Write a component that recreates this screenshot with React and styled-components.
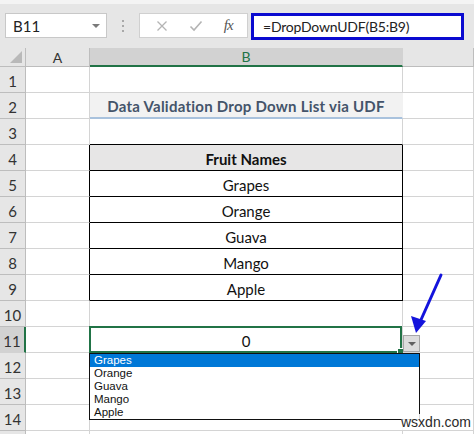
import React from "react";
import styled, { createGlobalStyle } from "styled-components";

const GRID = "#d4d4d4";
const HEAD_BG = "#e6e6e6";
const HEAD_SEL = "#d2d2d2";
const GREEN = "#217346";
const CELL_FONT = `Lato, "Open Sans", "Noto Sans", sans-serif`;

const Global = createGlobalStyle`
  html, body { margin: 0; padding: 0; background: #fff; }
  body { overflow: hidden; }
`;

const Page = styled.div`
  position: relative;
  width: 474px;
  height: 434px;
  overflow: hidden;
  background: #fff;
  font-family: ${CELL_FONT};
`;

/* ---------- formula bar ---------- */
const FormulaBar = styled.div`
  height: 48px;
  box-sizing: border-box;
  background: ${HEAD_BG};
  border-top: 4px solid #f4f4f4;
  display: flex;
  align-items: flex-start;
  padding: 9px 0 0 5px;
`;

const NameBox = styled.div`
  width: 102px;
  height: 25px;
  box-sizing: border-box;
  background: #fff;
  border: 1px solid #c8c8c8;
  display: flex;
  align-items: center;
  justify-content: space-between;
  padding: 0 6px 0 7px;
  font-size: 15px;
  color: #222;
`;

const Caret = styled.span`
  width: 0;
  height: 0;
  border-left: 4px solid transparent;
  border-right: 4px solid transparent;
  border-top: 4px solid #7a7a7a;
`;

const Dots = styled.div`
  width: 32px;
  height: 25px;
  display: flex;
  flex-direction: column;
  align-items: center;
  justify-content: center;
  gap: 3px;
  & > i {
    width: 2px;
    height: 2px;
    background: #a8a8a8;
  }
`;

const FxBox = styled.div`
  width: 109px;
  height: 25px;
  box-sizing: border-box;
  background: #fff;
  border: 1px solid #d0d0d0;
  display: flex;
  align-items: center;
  justify-content: space-around;
  padding: 0 4px 0 6px;
`;

const FxGlyph = styled.span`
  font-family: "Liberation Serif", serif;
  font-style: italic;
  font-size: 15px;
  color: #555;
  letter-spacing: -1px;
`;

const FormulaInput = styled.div`
  margin-left: 3px;
  width: 213px;
  height: 27px;
  box-sizing: border-box;
  border: 3px solid #0a0ad0;
  background: #fff;
  display: flex;
  align-items: center;
  padding-left: 9px;
  font-size: 14px;
  letter-spacing: -0.2px;
  color: #222;
`;

/* ---------- sheet grid ---------- */
const Sheet = styled.div`
  display: grid;
  grid-template-columns: 26px 64px 313px 1fr;
  grid-template-rows: 19px repeat(15, 26px);
`;

const Corner = styled.div`
  position: relative;
  background: ${HEAD_BG};
  box-sizing: border-box;
  border-right: 1px solid #bdbdbd;
  border-bottom: 1px solid #bdbdbd;
  &::after {
    content: "";
    position: absolute;
    right: 3px;
    bottom: 3px;
    width: 0;
    height: 0;
    border-left: 12px solid transparent;
    border-bottom: 12px solid #b9b9b9;
  }
`;

const ColHead = styled.div`
  box-sizing: border-box;
  background: ${(p) => (p.$active ? HEAD_SEL : HEAD_BG)};
  border-right: 1px solid ${(p) => (p.$active ? HEAD_SEL : "#bdbdbd")};
  border-bottom: ${(p) => (p.$active ? `2px solid ${GREEN}` : "1px solid #bdbdbd")};
  display: flex;
  align-items: center;
  justify-content: center;
  font-size: 14px;
  color: ${(p) => (p.$active ? GREEN : "#333")};
`;

const RowHead = styled.div`
  box-sizing: border-box;
  background: ${(p) => (p.$active ? HEAD_SEL : HEAD_BG)};
  border-right: ${(p) => (p.$active ? `2px solid ${GREEN}` : "1px solid #bdbdbd")};
  border-bottom: 1px solid ${(p) => (p.$active ? HEAD_SEL : "#bdbdbd")};
  display: flex;
  align-items: flex-end;
  justify-content: center;
  padding-bottom: 2px;
  font-size: 15px;
  color: #333;
`;

const Cell = styled.div`
  position: relative;
  box-sizing: border-box;
  background: ${(p) => p.$bg || "#fff"};
  border-right: 1px solid ${(p) => p.$right || GRID};
  border-bottom: ${(p) => p.$bottomW || 1}px solid ${(p) => p.$bottom || GRID};
  display: flex;
  align-items: flex-end;
  justify-content: center;
  padding-bottom: 2px;
  font-size: 15px;
  font-weight: ${(p) => (p.$bold ? 700 : 400)};
  letter-spacing: ${(p) => p.$spacing || 0}px;
  color: ${(p) => p.$color || "#111"};
  white-space: nowrap;
`;

const Selection = styled.div`
  position: absolute;
  inset: -1px 0 -1px -1px;
  border: 2px solid ${GREEN};
  pointer-events: none;
  &::after {
    content: "";
    position: absolute;
    right: -4px;
    bottom: -4px;
    width: 5px;
    height: 5px;
    background: ${GREEN};
    border: 1px solid #fff;
  }
`;

/* ---------- list popup and overlays ---------- */
const DropButton = styled.div`
  position: absolute;
  left: 403px;
  top: 335px;
  width: 17px;
  height: 17px;
  box-sizing: border-box;
  background: #dcdcdc;
  border: 1px solid #a6a6a6;
  display: flex;
  align-items: center;
  justify-content: center;
`;

const DropCaret = styled.span`
  width: 0;
  height: 0;
  border-left: 4px solid transparent;
  border-right: 4px solid transparent;
  border-top: 4px solid #606060;
`;

const ListBox = styled.ul`
  position: absolute;
  left: 89px;
  top: 353px;
  width: 331px;
  height: 67px;
  box-sizing: border-box;
  margin: 0;
  padding: 0;
  list-style: none;
  background: #fff;
  border: 1px solid #111;
  font-family: "Liberation Sans", Arial, sans-serif;
  font-size: 11.5px;
`;

const ListItem = styled.li`
  height: 13px;
  line-height: 13px;
  padding-left: 4px;
  background: ${(p) => (p.$selected ? "#0078d7" : "transparent")};
  color: ${(p) => (p.$selected ? "#fff" : "#111")};
`;

const Pointer = styled.svg`
  position: absolute;
  left: 0;
  top: 0;
  pointer-events: none;
`;

const Watermark = styled.div`
  position: absolute;
  left: 401px;
  top: 414px;
  font-family: "Liberation Sans", Arial, sans-serif;
  font-size: 14px;
  color: #2a2a2a;
  background: rgba(255, 255, 255, 0.85);
`;

const fruits = ["Grapes", "Orange", "Guava", "Mango", "Apple"];

function bCell(row) {
  const black = "#000";
  if (row === 2)
    return (
      <Cell
        $bg="#f2f2f2"
        $bottom="#a9c2dd"
        $bottomW={2}
        $bold
        $spacing={0.25}
        $color="#44546a"
        $right="#f2f2f2"
      >
        Data Validation Drop Down List via UDF
      </Cell>
    );
  if (row === 3) return <Cell $bottom={black} />;
  if (row === 4)
    return (
      <Cell $bg="#e7e6e6" $right={black} $bottom={black} $bold>
        Fruit Names
      </Cell>
    );
  if (row >= 5 && row <= 9)
    return (
      <Cell $right={black} $bottom={black}>
        {fruits[row - 5]}
      </Cell>
    );
  if (row === 11)
    return (
      <Cell>
        0
        <Selection />
      </Cell>
    );
  return <Cell />;
}

export default function App() {
  const rows = Array.from({ length: 15 }, (_, i) => i + 1);
  return (
    <Page>
      <Global />
      <FormulaBar>
        <NameBox>
          B11
          <Caret />
        </NameBox>
        <Dots>
          <i />
          <i />
          <i />
        </Dots>
        <FxBox>
          <svg width="12" height="12" viewBox="0 0 12 12">
            <path d="M1.5 1.5 L10.5 10.5 M10.5 1.5 L1.5 10.5" stroke="#b4b4b4" strokeWidth="1.3" fill="none" />
          </svg>
          <svg width="14" height="12" viewBox="0 0 14 12">
            <path d="M1.5 6.5 L5 10 L12.5 1.5" stroke="#b4b4b4" strokeWidth="1.6" fill="none" />
          </svg>
          <FxGlyph>fx</FxGlyph>
        </FxBox>
        <FormulaInput>=DropDownUDF(B5:B9)</FormulaInput>
      </FormulaBar>

      <Sheet>
        <Corner />
        <ColHead>A</ColHead>
        <ColHead $active>B</ColHead>
        <ColHead />
        {rows.map((r) => (
          <React.Fragment key={r}>
            {/* the last row only peeks in at the bottom edge */}
            <RowHead $active={r === 11}>{r < 15 ? r : null}</RowHead>
            <Cell $right={r >= 4 && r <= 9 ? "#000" : undefined} />
            {bCell(r)}
            <Cell />
          </React.Fragment>
        ))}
      </Sheet>

      <DropButton>
        <DropCaret />
      </DropButton>

      <ListBox>
        {fruits.map((f, i) => (
          <ListItem key={f} $selected={i === 0}>
            {f}
          </ListItem>
        ))}
      </ListBox>

      <Pointer width="474" height="434">
        <line x1="441" y1="275" x2="420" y2="322" stroke="#1414dc" strokeWidth="3" strokeLinecap="round" />
        <polygon points="416,333 411,316 426,321" fill="#1414dc" />
      </Pointer>

      <Watermark>wsxdn.com</Watermark>
    </Page>
  );
}
